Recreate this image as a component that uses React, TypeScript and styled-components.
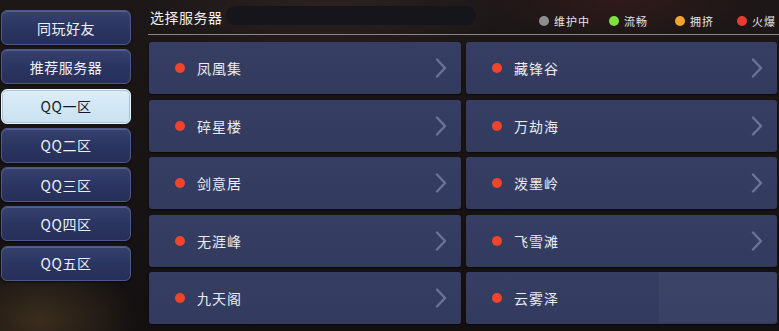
import React from "react";
import styled, { createGlobalStyle } from "styled-components";

const Global = createGlobalStyle`
  html, body { margin: 0; padding: 0; }
  body {
    width: 779px; height: 331px; overflow: hidden;
    background:
      radial-gradient(ellipse 140px 90px at 40px 320px, rgba(90,70,40,0.55), transparent 70%),
      radial-gradient(ellipse 200px 60px at 620px 0px, rgba(70,30,30,0.45), transparent 70%),
      radial-gradient(ellipse 260px 80px at 330px 10px, rgba(60,45,45,0.5), transparent 70%),
      linear-gradient(180deg, #1d1717 0%, #141011 100%);
    font-family: "Noto Sans CJK SC", "Noto Sans", sans-serif;
  }
`;

const Page = styled.div`
  display: flex;
  width: 779px;
  height: 331px;
  position: relative;
`;

const Sidebar = styled.nav`
  width: 131px;
  padding: 10px 0 0 1px;
  box-sizing: border-box;
  display: flex;
  flex-direction: column;
  gap: 4.3px;
  flex-shrink: 0;
`;

const SideButton = styled.div<{ $active?: boolean }>`
  height: 35px;
  box-sizing: border-box;
  display: flex;
  align-items: center;
  justify-content: center;
  font-size: 14px;
  letter-spacing: 0.5px;
  border-radius: 6px;
  color: ${(p) => (p.$active ? "#17192a" : "#eef0f8")};
  background: ${(p) =>
    p.$active
      ? "linear-gradient(180deg, #dcedf8 0%, #c9e1f2 100%)"
      : "linear-gradient(180deg, #36416d 0%, #2a3460 55%, #27305a 100%)"};
  border: 1px solid ${(p) => (p.$active ? "#e8f4fb" : "#4d5988")};
  box-shadow: ${(p) =>
    p.$active
      ? "inset 0 0 0 1px #a9c6dd"
      : "inset 0 1px 0 rgba(140,155,210,0.35), 0 1px 2px rgba(0,0,0,0.6)"};
`;

const Main = styled.main`
  flex: 1;
  min-width: 0;
  padding-left: 17px;
  display: flex;
  flex-direction: column;
`;

const Header = styled.header`
  height: 34px;
  border-bottom: 1px solid #8a8686;
  display: flex;
  align-items: center;
  box-sizing: content-box;
  padding-left: 2px;
`;

const Title = styled.div`
  color: #f0f0f4;
  font-size: 14px;
  letter-spacing: 0.5px;
  margin-top: -1px;
  white-space: nowrap;
`;

const SearchPill = styled.div`
  width: 250px;
  height: 19px;
  margin-left: 3px;
  margin-top: -4px;
  border-radius: 10px;
  background: #17151c;
  flex-shrink: 0;
`;

const Legend = styled.div`
  margin-left: auto;
  display: flex;
  align-items: center;
  margin-top: 8px;
  padding-right: 3px;
  flex-shrink: 0;
`;

const LegendItem = styled.div<{ $w?: number }>`
  display: flex;
  align-items: center;
  white-space: nowrap;
  ${(p) => (p.$w ? `width: ${p.$w}px;` : "")}
  font-size: 11px;
  color: #e4e4e8;
  letter-spacing: 1px;
`;

const Dot = styled.span<{ $c: string; $size?: number }>`
  display: inline-block;
  width: ${(p) => p.$size ?? 10}px;
  height: ${(p) => p.$size ?? 10}px;
  border-radius: 50%;
  background: ${(p) => p.$c};
  margin-right: 5px;
  flex-shrink: 0;
`;

const Grid = styled.div`
  display: grid;
  grid-template-columns: 312px 311px;
  grid-auto-rows: 52px;
  column-gap: 5px;
  row-gap: 5.5px;
  padding-top: 7px;
  margin-left: 1px;
`;

const Card = styled.div`
  background: linear-gradient(180deg, #363f63 0%, #323b5e 100%);
  border-radius: 3px;
  display: flex;
  align-items: center;
  padding: 0 14px 0 26px;
  box-shadow: 0 1px 2px rgba(0,0,0,0.6);
`;

const Name = styled.span`
  color: #ececf2;
  font-size: 14px;
  letter-spacing: 1px;
  margin-left: 7px;
`;

const Chevron = styled.svg`
  margin-left: auto;
  width: 12px;
  height: 20px;
`;

const Watermark = styled.div`
  position: absolute;
  left: 659px;
  top: 272px;
  width: 120px;
  height: 51px;
  background: rgba(255,255,255,0.03);
  pointer-events: none;
`;

const sides = ["同玩好友", "推荐服务器", "QQ一区", "QQ二区", "QQ三区", "QQ四区", "QQ五区"];
const servers = ["凤凰集", "藏锋谷", "碎星楼", "万劫海", "剑意居", "泼墨岭", "无涯峰", "飞雪滩", "九天阁", "云雾泽"];
const legend = [
  { c: "#8e8e92", t: "维护中", w: 70 },
  { c: "#7ee23a", t: "流畅", w: 66 },
  { c: "#f2a630", t: "拥挤", w: 62 },
  { c: "#ea3b32", t: "火爆", w: 0 },
];

export default function App() {
  return (
    <Page>
      <Global />
      <Sidebar>
        {sides.map((s, i) => (
          <SideButton key={s} $active={i === 2}>{s}</SideButton>
        ))}
      </Sidebar>
      <Main>
        <Header>
          <Title>选择服务器</Title>
          <SearchPill />
          <Legend>
            {legend.map((l) => (
              <LegendItem key={l.t} $w={l.w || undefined}>
                <Dot $c={l.c} $size={10} />
                {l.t}
              </LegendItem>
            ))}
          </Legend>
        </Header>
        <Grid>
          {servers.map((s, i) => (
            <Card key={s}>
              <Dot $c="#f0442c" $size={10} />
              <Name>{s}</Name>
              {i !== 9 && (
                <Chevron viewBox="0 0 12 20">
                  <path d="M2 1.5 L10 10 L2 18.5" fill="none" stroke="#6b7496" strokeWidth="2.4" strokeLinejoin="round" strokeLinecap="round" />
                </Chevron>
              )}
            </Card>
          ))}
        </Grid>
      </Main>
      <Watermark />
    </Page>
  );
}
